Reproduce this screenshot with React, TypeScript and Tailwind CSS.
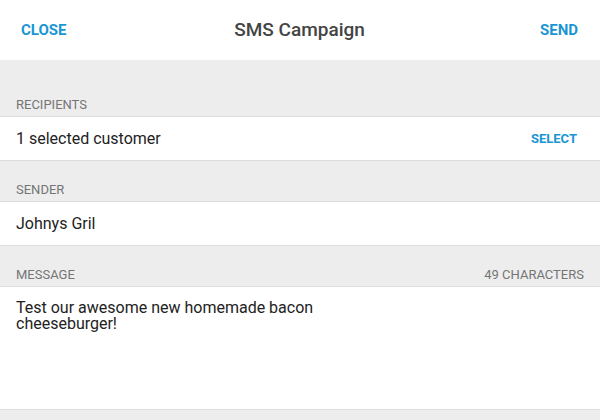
import React from 'react';

const blue = 'text-[#1a95d3]';

function SectionLabel({ label, right, extraTop }: { label: string; right?: string; extraTop?: boolean }) {
  return (
    <div
      className={`flex items-end justify-between px-4 pb-[4px] border-b border-[#dcdcdc] ${
        extraTop ? 'h-[57px]' : 'h-[41px]'
      }`}
    >
      <span className="text-[13px] leading-[14px] text-[#757575] uppercase">{label}</span>
      {right && <span className="text-[13px] leading-[14px] text-[#757575]">{right}</span>}
    </div>
  );
}

export default function App() {
  return (
    <div
      className="w-[600px] h-[420px] bg-[#ededed] overflow-hidden"
      style={{ fontFamily: 'Roboto, "Liberation Sans", sans-serif' }}
    >
      <header className="h-[60px] bg-white grid grid-cols-[1fr_auto_1fr] items-center pl-[21px] pr-[22px]">
        <button className={`justify-self-start text-[15px] font-bold ${blue}`}>CLOSE</button>
        <h1 className="text-[19px] font-medium text-[#444]">SMS Campaign</h1>
        <button className={`justify-self-end text-[15px] font-bold ${blue}`}>SEND</button>
      </header>

      <SectionLabel label="Recipients" extraTop />
      <div className="h-[44px] bg-white border-b border-[#dcdcdc] flex items-center justify-between pl-4 pr-[23px]">
        <span className="text-[16px] text-[#222]">1 selected customer</span>
        <button className={`text-[13px] font-bold ${blue}`}>SELECT</button>
      </div>

      <SectionLabel label="Sender" />
      <div className="h-[44px] bg-white border-b border-[#dcdcdc] flex items-center pl-4">
        <span className="text-[16px] text-[#222]">Johnys Gril</span>
      </div>

      <SectionLabel label="Message" right="49 CHARACTERS" />
      <div className="h-[123px] bg-white border-b border-[#dcdcdc] pl-4 pt-[13px]">
        <p className="text-[16px] leading-[16px] text-[#222] w-[320px]">
          Test our awesome new homemade bacon cheeseburger!
        </p>
      </div>
    </div>
  );
}
